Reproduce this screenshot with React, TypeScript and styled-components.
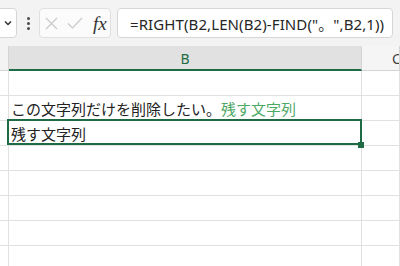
import React from 'react';
import styled, { createGlobalStyle } from 'styled-components';

const GlobalStyle = createGlobalStyle`
  body {
    margin: 0;
    background: #ffffff;
    overflow: hidden;
  }
`;

const GREEN = '#1f6b45';
const LINE = '#e1e1e1';

const Page = styled.div`
  width: 400px;
  height: 266px;
  overflow: hidden;
  background: #ffffff;
  font-family: 'Noto Sans', 'Noto Sans CJK JP', sans-serif;
  color: #222222;
`;

const Toolbar = styled.div`
  height: 46px;
  display: flex;
  align-items: center;
  background: #f3f3f3;
`;

const NameBox = styled.div`
  margin-left: -40px;
  width: 57px;
  height: 30px;
  box-sizing: border-box;
  border: 1px solid #d6d6d6;
  border-radius: 4px;
  background: #ffffff;
  display: flex;
  align-items: center;
  justify-content: flex-end;
  padding-right: 4px;
`;

const Dots = styled.div`
  width: 3px;
  margin: 0 9px 0 10px;
  display: flex;
  flex-direction: column;
  gap: 2px;

  span {
    width: 3px;
    height: 3px;
    border-radius: 50%;
    background: #4a4a4a;
  }
`;

const FxGroup = styled.div`
  width: 72px;
  height: 30px;
  box-sizing: border-box;
  border: 1px solid #e0e0e0;
  border-radius: 4px;
  background: #fbfbfb;
  display: flex;
  align-items: center;
  padding-left: 5px;
  gap: 9px;
`;

const FxLabel = styled.span`
  font-family: 'Liberation Serif', serif;
  font-style: italic;
  font-size: 19px;
  color: #333333;
  margin-left: 1px;
  line-height: 1;
`;

const FormulaBar = styled.div`
  flex: 1;
  margin: 0 7px 0 6px;
  height: 30px;
  box-sizing: border-box;
  border: 1px solid #d6d6d6;
  border-radius: 4px;
  background: #ffffff;
  display: flex;
  align-items: center;
  padding-left: 12px;
  font-size: 15px;
  letter-spacing: 0.1px;
  color: #262626;
  white-space: nowrap;
  overflow: hidden;
`;

const Row = styled.div`
  display: grid;
  grid-template-columns: 9px 353px 1fr;
  height: 25px;
`;

const Corner = styled.div`
  background: #f3f3f3;
  border-right: 1px solid #d4d4d4;
  border-bottom: 1px solid #d4d4d4;
`;

const ColHead = styled.div<{ $active?: boolean }>`
  box-sizing: border-box;
  background: ${({ $active }) => ($active ? '#e1e1e1' : '#f5f5f5')};
  border-right: 1px solid #d4d4d4;
  border-bottom: ${({ $active }) => ($active ? `2px solid ${GREEN}` : '1px solid #d4d4d4')};
  color: ${({ $active }) => ($active ? GREEN : '#444444')};
  font-size: 14px;
  display: flex;
  align-items: center;
  justify-content: ${({ $active }) => ($active ? 'center' : 'flex-start')};
  padding-left: ${({ $active }) => ($active ? '0' : '30px')};
  padding-top: 1px;
  overflow: hidden;
`;

const Cell = styled.div<{ $selected?: boolean }>`
  position: relative;
  box-sizing: border-box;
  border-right: 1px solid ${LINE};
  border-bottom: 1px solid ${LINE};
  display: flex;
  align-items: center;
  padding-left: 2px;
  font-family: 'Noto Sans CJK JP', sans-serif;
  font-size: 15px;
  white-space: nowrap;
  color: #222222;

  ${({ $selected }) =>
    $selected &&
    `
    &::after {
      content: '';
      position: absolute;
      top: -2px;
      left: -2px;
      right: -1px;
      bottom: 0;
      border: 2px solid ${GREEN};
      pointer-events: none;
    }
  `}
`;

const FillHandle = styled.span`
  position: absolute;
  right: -3px;
  bottom: -3px;
  width: 6px;
  height: 6px;
  background: ${GREEN};
  z-index: 1;
`;

const Kept = styled.span`
  color: #4ea865;
`;

const Chevron = () => (
  <svg width="8" height="6" viewBox="0 0 8 6">
    <path d="M1 1.5 L4 4.5 L7 1.5" fill="none" stroke="#333" strokeWidth="1.5" />
  </svg>
);

const Cross = () => (
  <svg width="13" height="13" viewBox="0 0 13 13">
    <path d="M1 1 L12 12 M12 1 L1 12" stroke="#c9c9c9" strokeWidth="1.2" />
  </svg>
);

const Check = () => (
  <svg width="16" height="12" viewBox="0 0 16 12">
    <path d="M1 6.5 L5.5 11 L15 1" fill="none" stroke="#c9c9c9" strokeWidth="1.2" />
  </svg>
);

const rows = [
  { text: null },
  {
    text: (
      <>
        この文字列だけを削除したい。<Kept>残す文字列</Kept>
      </>
    ),
  },
  { text: '残す文字列', selected: true },
  { text: null },
  { text: null },
  { text: null },
  { text: null },
  { text: null },
];

export default function App() {
  return (
    <Page>
      <GlobalStyle />
      <Toolbar>
        <NameBox>
          <Chevron />
        </NameBox>
        <Dots>
          <span />
          <span />
          <span />
        </Dots>
        <FxGroup>
          <Cross />
          <Check />
          <FxLabel>fx</FxLabel>
        </FxGroup>
        <FormulaBar>=RIGHT(B2,LEN(B2)-FIND("。",B2,1))</FormulaBar>
      </Toolbar>
      <Row>
        <Corner />
        <ColHead $active>B</ColHead>
        <ColHead>C</ColHead>
      </Row>
      {rows.map((r, i) => (
        <Row key={i}>
          <Cell />
          <Cell $selected={r.selected}>
            {r.text}
            {r.selected && <FillHandle />}
          </Cell>
          <Cell />
        </Row>
      ))}
    </Page>
  );
}
